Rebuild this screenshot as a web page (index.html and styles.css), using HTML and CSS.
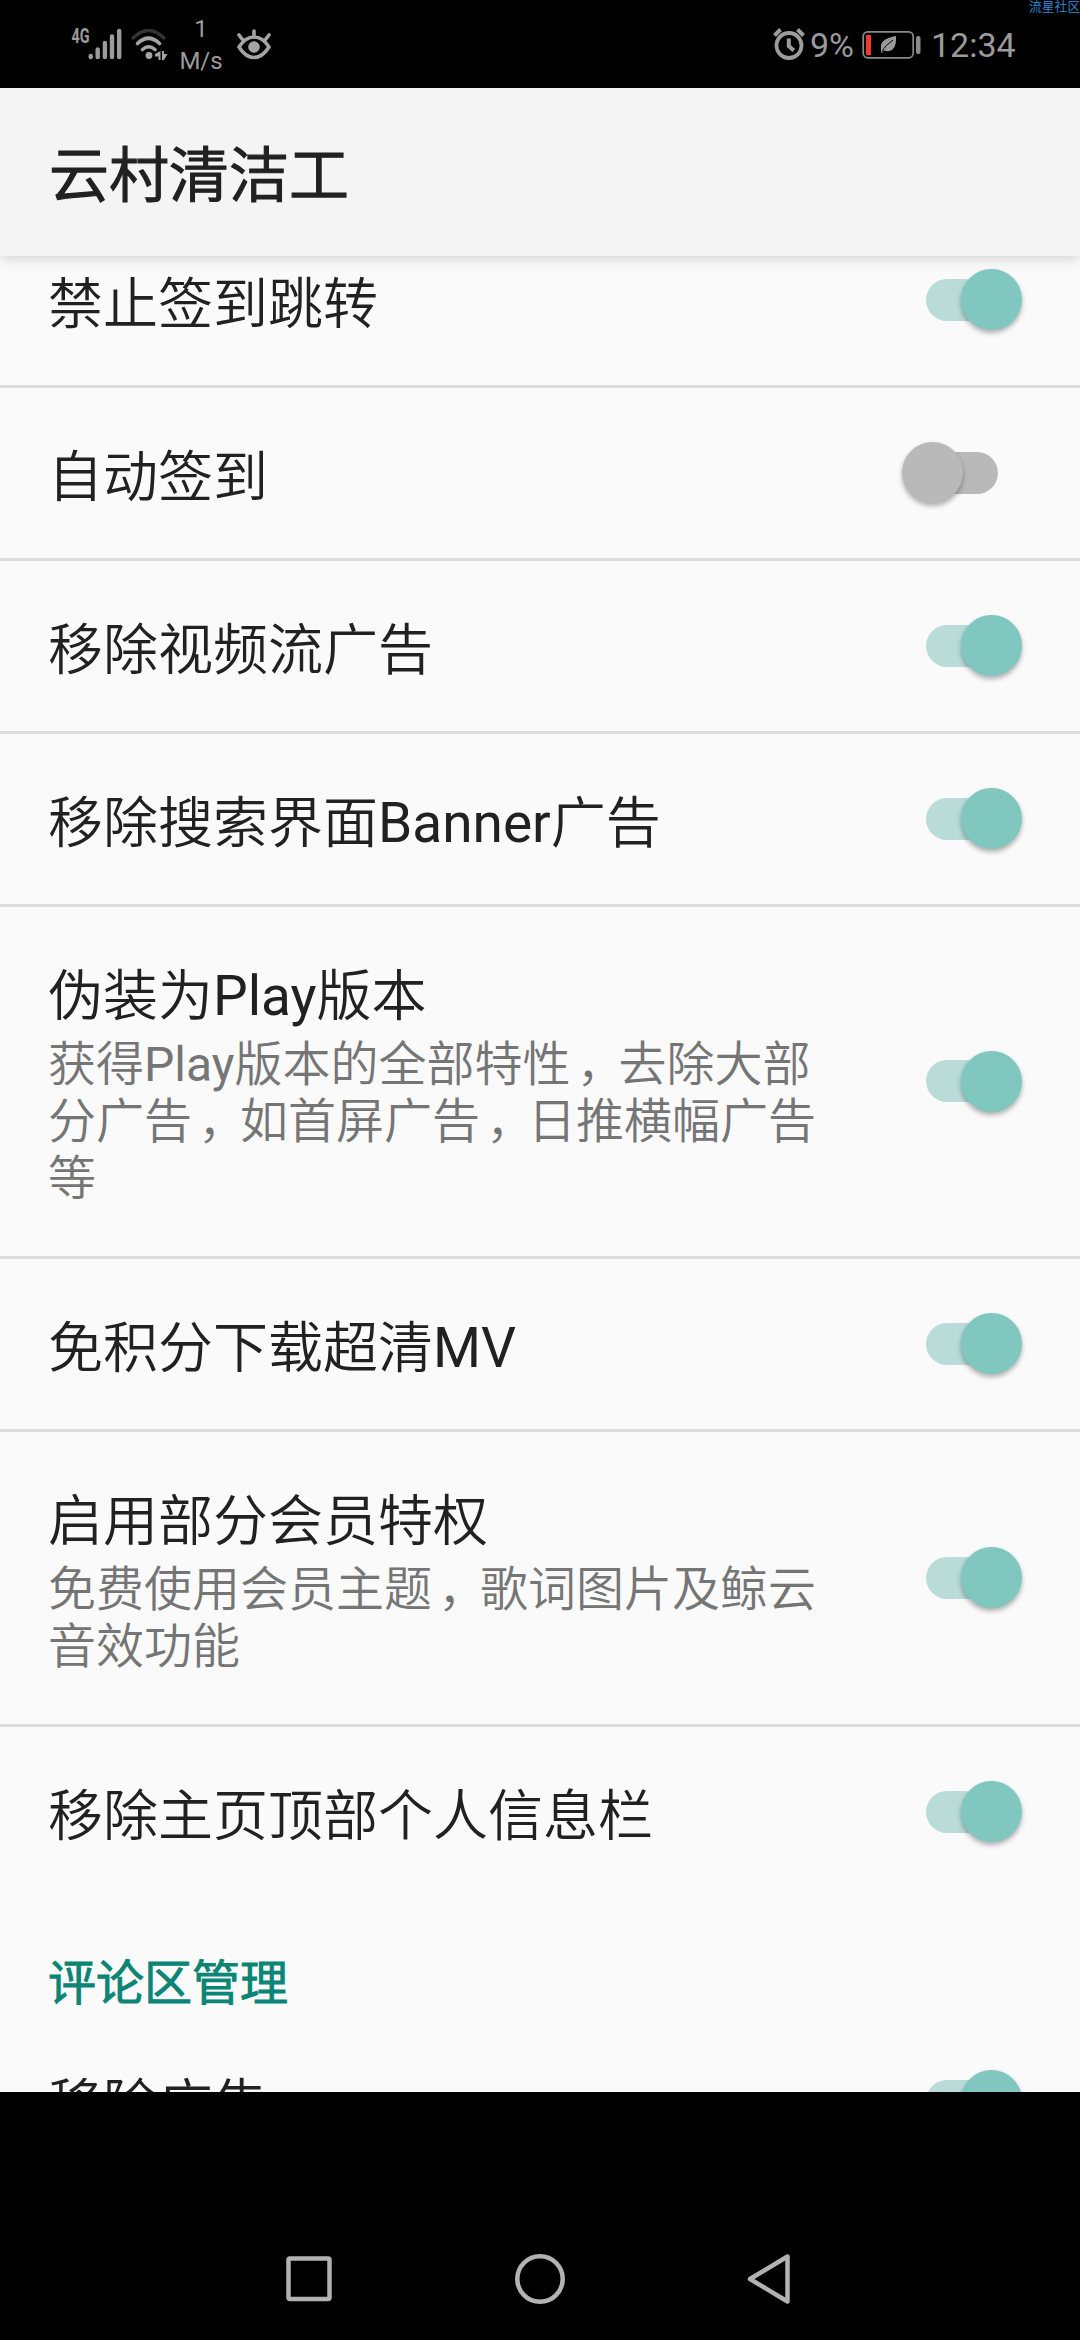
FILE: index.html
```html
<!DOCTYPE html>
<html lang="zh-CN">
<head>
<meta charset="utf-8">
<title>云村清洁工</title>
<link rel="stylesheet" href="styles.css">
</head>
<body>
<div class="status">
  <svg class="signal" width="52" height="36" viewBox="0 0 52 36" stroke="#9b9b9b" stroke-width="4.4" stroke-linecap="round"><path d="M20.700 29v1M27.700 22.500v7.500M34.900 16v14M42 9.500v20.500M49.200 4v26"/><text x="1.500" y="15.500" class="net" textLength="18" lengthAdjust="spacingAndGlyphs">4G</text></svg>
  <svg class="wifi" width="38" height="36" viewBox="0 0 38 36" fill="none" stroke="#a4a4a4" stroke-width="3.600" stroke-linecap="round"><path stroke="#343434" stroke-width="3.200" d="M3 12Q18.500-3 34 12"/><path d="M7.500 17.500Q18.500 7 29.500 17.500M12.500 23.500Q18.500 18 25 23.500"/><circle cx="19" cy="29.500" r="3.400" fill="#a4a4a4" stroke="none"/><path fill="#a4a4a4" stroke="none" d="M30.500 25v9h-2v-3.500H25v-2.500zM32 25h2v3h3.500l-3.500 6h-2z"/></svg>
  <div class="speed"><span>1</span><span>M/s</span></div>
  <svg class="eye" width="36" height="34" viewBox="0 0 36 34" fill="none" stroke="#a4a4a4" stroke-width="3.600" stroke-linecap="round" stroke-linejoin="round"><path d="M3 20C8 12 13 10 18 10s10 2 15 10c-5 8-10 10.500-15 10.500S8 28 3 20zM18 9V4M6.500 12.500L3 8M29.500 12.500L33 8"/><circle cx="18" cy="20" r="5.800" fill="#a4a4a4" stroke="none"/></svg>
  <svg class="alarm" width="32" height="34" viewBox="0 0 32 34" fill="none" stroke="#9d9d9d" stroke-width="3.800"><circle cx="16" cy="19.500" r="12.500"/><path stroke-width="4" d="M15.800 12.500v7.500l5 4.500M1.500 9.500l6-6M24.500 3.500l6 6"/></svg>
  <span class="pct">9%</span>
  <svg class="battery" width="59" height="30" viewBox="0 0 59 30"><rect x="1.200" y="1.800" width="50" height="26" rx="4.500" fill="none" stroke="#8a8a8a" stroke-width="1.700"/><rect x="4" y="5" width="5" height="20" fill="#f03a27"/><rect x="54" y="6" width="4.500" height="18" rx="2" fill="#8a8a8a"/><path fill="#999" d="M34 6C23 8 18 12 19 18v4l1 1 2-2.500C29 23 35 19 34 6z"/><path stroke="#000" fill="none" d="M20 22C22 17 26 14 31 10"/></svg>
  <span class="clock">12:34</span>
  <span class="mark">流星社区</span>
</div>
<header class="bar"><h1>云村清洁工</h1></header>
<main class="list">
  <section class="row first"><div class="text"><h2>禁止签到跳转</h2></div><i class="switch on"></i></section>
  <section class="row"><div class="text"><h2>自动签到</h2></div><i class="switch"></i></section>
  <section class="row"><div class="text"><h2>移除视频流广告</h2></div><i class="switch on"></i></section>
  <section class="row"><div class="text"><h2>移除搜索界面Banner广告</h2></div><i class="switch on"></i></section>
  <section class="row three"><div class="text"><h2>伪装为Play版本</h2><p>获得Play版本的全部特性<span class="comma">，</span>去除大部<br>分广告<span class="comma">，</span>如首屏广告<span class="comma">，</span>日推横幅广告<br>等</p></div><i class="switch on"></i></section>
  <section class="row"><div class="text"><h2>免积分下载超清MV</h2></div><i class="switch on"></i></section>
  <section class="row two"><div class="text"><h2>启用部分会员特权</h2><p>免费使用会员主题<span class="comma">，</span>歌词图片及鲸云<br>音效功能</p></div><i class="switch on"></i></section>
  <section class="row last"><div class="text"><h2>移除主页顶部个人信息栏</h2></div><i class="switch on"></i></section>
  <h3 class="category">评论区管理</h3>
  <section class="row last"><div class="text"><h2>移除广告</h2></div><i class="switch on"></i></section>
</main>
<nav class="nav">
  <svg width="60" height="60" viewBox="0 0 60 60"><rect x="9.500" y="9.500" width="41" height="40.500" rx="1.500"/></svg>
  <svg width="60" height="60" viewBox="0 0 60 60"><circle cx="30" cy="30" r="22.700"/></svg>
  <svg width="60" height="60" viewBox="0 0 60 60"><path d="M46.500 7.500v45L9 30z"/></svg>
</nav>
</body>
</html>
```
FILE: styles.css
```css
* { box-sizing: border-box; margin: 0; padding: 0; }
body {
  width: 1080px;
  height: 2340px;
  display: flex;
  flex-direction: column;
  overflow: hidden;
  background: #000;
  font-family: Roboto, "Noto Sans CJK SC DemiLight", "Noto Sans CJK SC", sans-serif;
}
svg { display: block; flex: none; }
.status {
  position: relative;
  flex: none;
  height: 88px;
  display: flex;
  align-items: flex-start;
  padding-left: 70px;
  color: #9b9b9b;
  white-space: nowrap;
}
.signal { margin-top: 27px; overflow: visible; }
.net { font: 700 20px Roboto, sans-serif; fill: #9b9b9b; stroke: none; }
.wifi { margin: 26px 0 0 8px; }
.speed {
  width: 42px;
  margin: 13px 0 0 12px;
  font-size: 24px;
  line-height: 32px;
  display: flex;
  flex-direction: column;
  align-items: center;
}
.eye { margin: 27px 0 0 14px; }
.alarm { margin: 26px 0 0 501px; }
.pct { margin: 25px 0 0 5px; font-size: 34px; line-height: 40px; width: 45px; }
.battery { margin: 30px 0 0 7px; }
.clock { margin: 25px 0 0 10px; font-size: 34px; line-height: 40px; }
.mark {
  position: absolute;
  left: 1029px;
  top: -3px;
  font-size: 12.8px;
  line-height: 19px;
  color: #2f8fdc;
}
.bar {
  position: relative;
  z-index: 1;
  flex: none;
  height: 168px;
  padding: 9px 0 0 49px;
  display: flex;
  align-items: center;
  background: #f4f4f4;
  box-shadow: 0 1px 14px rgba(0, 0, 0, .2);
}
h1 { font-size: 60px; font-weight: 400; line-height: 88px; color: #212121; -webkit-text-stroke: 1.2px #212121; }
.list { flex: none; height: 1836px; overflow: hidden; background: #fafafa; }
.row {
  height: 173px;
  padding: 57px 58px 0 48px;
  display: flex;
  justify-content: space-between;
  border-bottom: 3px solid #dcdcdc;
}
.first { margin-top: -41px; }
.three { height: 352px; }
.two { height: 295px; }
.last { height: 170px; border-bottom: 0; }
.text { white-space: nowrap; }
h2 { font-size: 55px; font-weight: 400; line-height: 64px; color: #212121; }
p { margin-top: 8px; font-size: 48px; font-weight: 400; line-height: 57px; color: #757575; }
.comma { margin-left: .13em; letter-spacing: -.13em; }
.switch {
  flex: none;
  align-self: center;
  margin-top: -58px;
  width: 120px;
  height: 61px;
  display: grid;
}
.switch::before {
  content: "";
  grid-area: 1 / 1;
  align-self: center;
  margin-left: 24px;
  width: 72px;
  height: 42px;
  border-radius: 21px;
  background: #b9b9b9;
}
.switch::after {
  content: "";
  grid-area: 1 / 1;
  width: 61px;
  height: 61px;
  border-radius: 50%;
  background: #b9b9b9;
  box-shadow: 0 3px 5px rgba(0, 0, 0, .3);
}
.on::before { background: #b9dcd8; }
.on::after { justify-self: end; background: #7fc7bf; }
.category {
  height: 119px;
  padding: 51px 0 0 48px;
  font-size: 48px;
  font-weight: 400;
  line-height: 72px;
  color: #0b8575;
  -webkit-text-stroke: 1.2px #0b8575;
}
.nav {
  flex: 1;
  display: flex;
  justify-content: center;
  align-items: flex-start;
  gap: 171px;
  padding-top: 157px;
}
.nav svg { fill: none; stroke: #b2b2b2; stroke-width: 4.500; stroke-linejoin: round; }
```
